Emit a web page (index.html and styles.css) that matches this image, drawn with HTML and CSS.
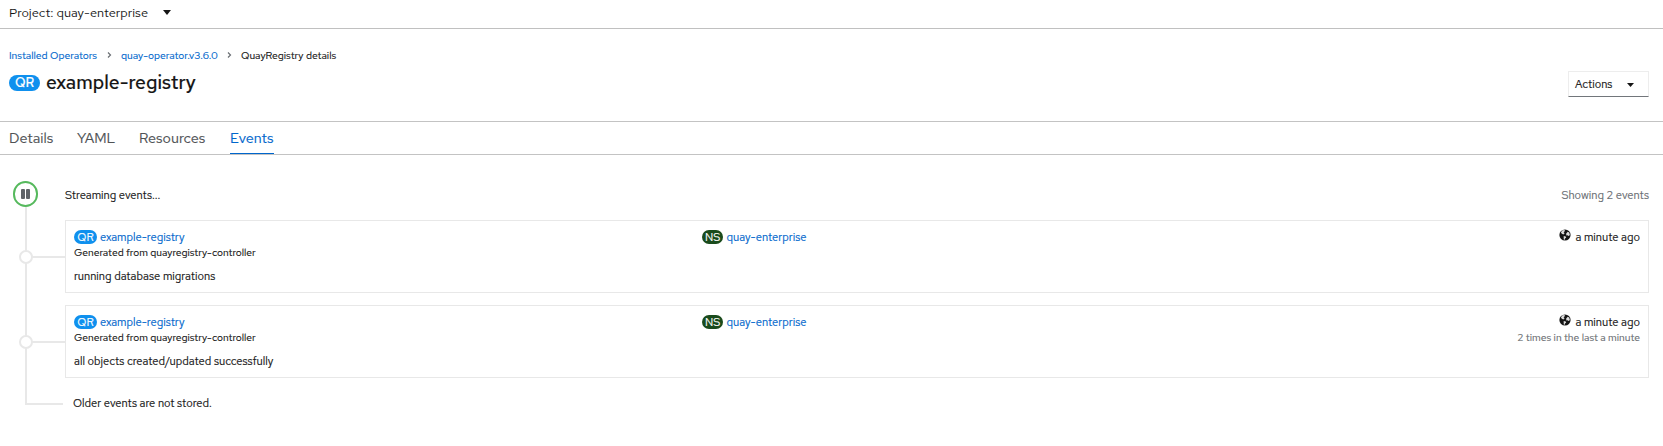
FILE: index.html
```html
<!DOCTYPE html>
<html lang="en">
<head>
<meta charset="utf-8">
<title>example-registry · Events</title>
<link rel="stylesheet" href="styles.css">
</head>
<body>
<div class="project-bar"><span class="project-name">Project: quay-enterprise</span><i class="caret"></i></div>
<header class="page-head">
  <nav class="crumbs">
    <a class="crumb-operators">Installed Operators</a>
    <svg class="chevron" viewBox="0 0 5 8"><path d="M1 1.5l2.5 2.5-2.5 2.5"/></svg>
    <a class="crumb-version">quay-operator.v3.6.0</a>
    <svg class="chevron" viewBox="0 0 5 8"><path d="M1 1.5l2.5 2.5-2.5 2.5"/></svg>
    <span class="crumb-current">QuayRegistry details</span>
  </nav>
  <div class="title-row">
    <h1><span class="badge badge-large">QR</span><span class="title">example-registry</span></h1>
    <button class="actions"><span>Actions</span><i class="caret"></i></button>
  </div>
</header>
<nav class="tabs"><a class="tab-details">Details</a><a class="tab-yaml">YAML</a><a class="tab-resources">Resources</a><a class="tab-events active">Events</a></nav>
<main class="stream">
  <div class="stream-head">
    <div class="rail"><span class="pause"><i></i><i></i></span></div>
    <span class="streaming">Streaming events...</span><span class="count">Showing 2 events</span>
  </div>
  <div class="event">
    <div class="rail"><span class="node"></span></div>
    <article class="card">
      <div class="cell"><div class="line"><span class="badge">QR</span><a class="name">example-registry</a></div><div class="source">Generated from quayregistry-controller</div></div>
      <div class="cell"><div class="line"><span class="badge badge-ns">NS</span><a class="namespace">quay-enterprise</a></div></div>
      <div class="cell when"><div class="line"><svg class="globe" viewBox="0 0 12 12"><circle cx="6" cy="6" r="5.6"/><path d="M1.9 3.2L3.6 1.3 5.9 1 5.6 2.5 4.6 3.3 5.6 4.2 4.4 5.6 2.8 4.7zM7.2 4.6l1.5-1.8 1.5.7.7 2.6-1.2.9-1.3-.7-1.1.3zM4.7 6.9l2 .5.5 1.2-1.2 1-.4 1.4-.9-.8z"/></svg><span class="ago">a minute ago</span></div></div>
      <p class="message">running database migrations</p>
    </article>
  </div>
  <div class="event">
    <div class="rail"><span class="node"></span></div>
    <article class="card">
      <div class="cell"><div class="line"><span class="badge">QR</span><a class="name">example-registry</a></div><div class="source">Generated from quayregistry-controller</div></div>
      <div class="cell"><div class="line"><span class="badge badge-ns">NS</span><a class="namespace">quay-enterprise</a></div></div>
      <div class="cell when"><div class="line"><svg class="globe" viewBox="0 0 12 12"><circle cx="6" cy="6" r="5.6"/><path d="M1.9 3.2L3.6 1.3 5.9 1 5.6 2.5 4.6 3.3 5.6 4.2 4.4 5.6 2.8 4.7zM7.2 4.6l1.5-1.8 1.5.7.7 2.6-1.2.9-1.3-.7-1.1.3zM4.7 6.9l2 .5.5 1.2-1.2 1-.4 1.4-.9-.8z"/></svg><span class="ago">a minute ago</span></div><div class="repeat">2 times in the last a minute</div></div>
      <p class="message">all objects created/updated successfully</p>
    </article>
  </div>
  <div class="stream-end"><div class="elbow"></div><span class="older">Older events are not stored.</span></div>
</main>
</body>
</html>
```

FILE: styles.css
```css
* { box-sizing: border-box; }
body { margin: 0; background: #fff; color: #151515; font: 11.2px/16px "Red Hat Text", "Open Sans", "Noto Sans", sans-serif; white-space: nowrap; -webkit-text-stroke: .15px currentColor; }
a { color: #06c; }
.project-bar { height: 29px; border-bottom: 1px solid #c0c0c0; padding: 2px 0 0 9px; display: flex; font-size: 12.8px; line-height: 21px; -webkit-text-stroke: 0; }
.project-name { width: 154px; }
.caret { width: 8px; height: 5px; margin-top: 8px; background: #151515; clip-path: polygon(0 0, 100% 0, 50% 100%); }
.page-head { height: 92px; padding: 17px 14px 0 9px; }
.crumbs { display: flex; align-items: center; height: 17px; font-size: 10.35px; }
.crumb-operators { width: 98px; }
.crumb-version { width: 106px; margin-left: 9px; }
.crumb-current { margin-left: 9px; }
.chevron { width: 5px; height: 8px; fill: none; stroke: #6a6e73; stroke-width: 1.2; }
.title-row { display: flex; justify-content: space-between; margin-top: 8px; }
h1 { display: flex; align-items: center; height: 23px; margin: 0; font-size: 19.2px; line-height: 23px; font-weight: 500; }
.title { margin-top: -1px; }
.badge { width: 23px; height: 14px; border-radius: 7px; background: #0f90ee; color: #fff; font-size: 11.2px; line-height: 14px; text-align: center; margin-right: 3px; }
.badge-large { width: 31px; height: 16px; border-radius: 8px; font-size: 13px; line-height: 16px; font-weight: 500; margin-right: 6px; }
.badge-ns { width: 21px; background: #1a4b1c; margin-right: 3.5px; }
.actions { display: flex; width: 81px; height: 26px; margin: 0; padding: 4px 6px 0; border: 1px solid #ededed; border-bottom-color: #72767b; background: #fff; color: #151515; font: inherit; }
.actions span { width: 52px; text-align: left; }
.actions .caret { width: 7px; height: 4px; margin-top: 7px; }
.tabs { height: 34px; border-top: 1px solid #c3c3c3; border-bottom: 1px solid #c3c3c3; padding-left: 9px; display: flex; font-size: 14.4px; line-height: 31px; }
.tabs a { height: 32px; margin-right: 24px; color: #4f5255; }
.tab-details { width: 44px; }
.tab-yaml { width: 38px; }
.tab-resources { width: 67px; }
.tab-events { width: 44px; }
.tabs .active { color: #06c; border-bottom: 1px solid #06c; }
.stream { padding: 26px 14px 0 13px; }
.stream-head { display: flex; height: 39px; }
.rail { width: 52px; flex: none; display: flex; flex-direction: column; background: linear-gradient(#e8e8e8, #e8e8e8) 12px 0 / 2px 100% no-repeat; }
.pause { width: 25px; height: 26px; border: 2px solid #56b95d; border-radius: 13px; background: #fff; display: flex; justify-content: center; align-items: center; gap: 1px; }
.pause i { width: 4px; height: 10px; background: #5f6368; border-radius: 1px; }
.streaming, .count { margin-top: 6px; }
.count { margin-left: auto; color: #6a6e73; }
.event { display: flex; height: 85px; }
.event .rail { background: linear-gradient(#e8e8e8, #e8e8e8) 12px 0 / 2px 100% no-repeat, linear-gradient(#e8e8e8, #e8e8e8) 12px 36px / 40px 2px no-repeat; padding: 30px 0 0 6px; }
.node { width: 14px; height: 14px; border: 2px solid #e8e8e8; border-radius: 50%; background: #fff; }
.card { flex: 1; height: 73px; border: 1px solid #e8e8e8; padding: 8px 8px 0; display: grid; grid-template: 39px 20px / 628px 1fr 1fr; }
.line { display: flex; align-items: center; height: 16px; }
.when { text-align: right; }
.when .line { justify-content: flex-end; }
.globe { width: 12px; height: 12px; margin: -4px 4px 0 0; fill: #151515; }
.globe path { fill: #fff; opacity: .85; }
.source { font-size: 10.32px; line-height: 15px; }
.repeat { font-size: 10.32px; line-height: 15px; color: #6a6e73; }
.message { margin: 0; grid-column: 1 / -1; }
.stream-end { display: flex; height: 20px; }
.elbow { width: 38px; height: 15px; margin: 0 10px 0 12px; border: solid #e8e8e8; border-width: 0 0 2px 2px; }
.older { margin-top: 5px; }
```
